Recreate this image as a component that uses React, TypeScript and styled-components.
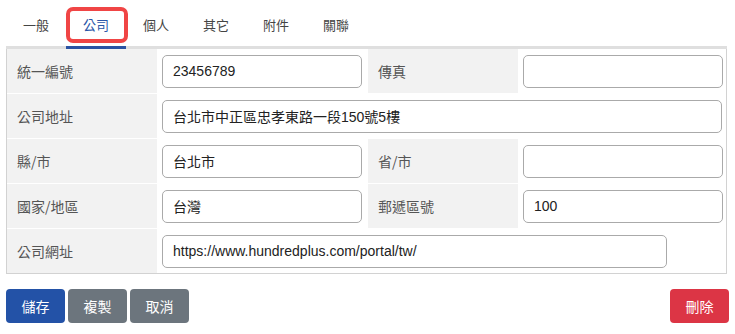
import React from "react";
import styled, { createGlobalStyle } from "styled-components";

const GlobalStyle = createGlobalStyle`
  body {
    margin: 0;
    background: #fff;
    font-family: "Liberation Sans", "Noto Sans CJK TC", sans-serif;
  }
`;

const tabs = ["一般", "公司", "個人", "其它", "附件", "關聯"];

type Field = {
  label: string;
  value?: string;
  wide?: boolean;
  width?: number;
};

const rows: Field[][] = [
  [{ label: "統一編號", value: "23456789" }, { label: "傳真", value: "" }],
  [{ label: "公司地址", value: "台北市中正區忠孝東路一段150號5樓", wide: true, width: 560 }],
  [{ label: "縣/市", value: "台北市" }, { label: "省/市", value: "" }],
  [{ label: "國家/地區", value: "台灣" }, { label: "郵遞區號", value: "100" }],
  [{ label: "公司網址", value: "https://www.hundredplus.com/portal/tw/", wide: true, width: 505 }],
];

const App: React.FC = () => {
  return (
    <>
      <GlobalStyle />
      <Page>
        <TabBar>
          {tabs.map((t, i) => (
            <Tab key={t} active={i === 1}>
              {t}
              {i === 1 && <Highlight />}
            </Tab>
          ))}
        </TabBar>
        <Panel>
          {rows.map((row, ri) =>
            row.map((f, fi) => (
              <React.Fragment key={`${ri}-${fi}`}>
                <Label>{f.label}</Label>
                <InputCell wide={f.wide}>
                  <TextInput
                    readOnly
                    value={f.value}
                    style={f.width ? { width: f.width } : undefined}
                  />
                </InputCell>
              </React.Fragment>
            ))
          )}
        </Panel>
        <Actions>
          <Left>
            <Button variant="primary">儲存</Button>
            <Button variant="secondary">複製</Button>
            <Button variant="secondary">取消</Button>
          </Left>
          <Button variant="danger">刪除</Button>
        </Actions>
      </Page>
    </>
  );
};

export default App;

const Page = styled.div`
  padding: 0 6px;
  width: 723px;
`;

const TabBar = styled.div`
  display: flex;
  height: 46px;
  width: 721px;
  border-bottom: 3px solid #dfdfdf;
`;

const Tab = styled.div<{ active?: boolean }>`
  position: relative;
  width: 60px;
  display: flex;
  align-items: center;
  justify-content: center;
  padding-top: 2px;
  box-sizing: border-box;
  font-family: "Noto Sans CJK TC", sans-serif;
  font-size: 13px;
  color: ${(p) => (p.active ? "#2a56a8" : "#444")};
  border-bottom: 3px solid ${(p) => (p.active ? "#2a52a3" : "transparent")};
  margin-bottom: -3px;
  height: 49px;
`;

const Highlight = styled.span`
  position: absolute;
  left: 0;
  top: 7px;
  width: 62px;
  height: 36px;
  box-sizing: border-box;
  border: 4px solid #f04545;
  border-radius: 7px;
`;

const Panel = styled.div`
  display: grid;
  grid-template-columns: 150px 211px 150px 208px;
  grid-auto-rows: 44px;
  row-gap: 1px;
  width: 719px;
  border: 1px solid #d2d2d2;
  border-top: none;
`;

const Label = styled.div`
  background: #f2f2f2;
  display: flex;
  align-items: center;
  padding-left: 10px;
  font-family: "Noto Sans CJK TC", sans-serif;
  font-size: 14px;
  color: #555;
`;

const InputCell = styled.div<{ wide?: boolean }>`
  display: flex;
  align-items: center;
  padding-left: 5px;
  grid-column: ${(p) => (p.wide ? "span 3" : "auto")};
`;

const TextInput = styled.input`
  width: 200px;
  height: 33px;
  box-sizing: border-box;
  border: 1px solid #aaa;
  border-radius: 5px;
  padding: 0 10px;
  font-family: "Liberation Sans", "Noto Sans CJK TC", sans-serif;
  font-size: 14px;
  color: #222;
  background: #fff;
  outline: none;
`;

const Actions = styled.div`
  display: flex;
  justify-content: space-between;
  margin-top: 15px;
`;

const Left = styled.div`
  display: flex;
  gap: 3px;
`;

const colors = {
  primary: "#2352a7",
  secondary: "#6c757d",
  danger: "#dc3545",
};

const Button = styled.button<{ variant: keyof typeof colors }>`
  width: 59px;
  height: 34px;
  border: none;
  border-radius: 4px;
  background: ${(p) => colors[p.variant]};
  color: #fff;
  font-family: "Noto Sans CJK TC", sans-serif;
  font-size: 14px;
  padding: 0;
`;
